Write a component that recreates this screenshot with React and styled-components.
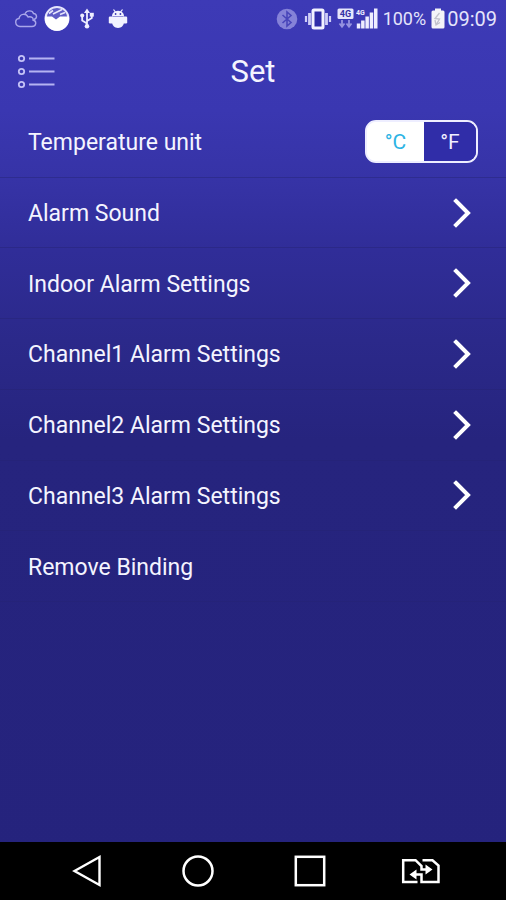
import React, { useState } from "react";
import styled, { createGlobalStyle } from "styled-components";

const GlobalStyle = createGlobalStyle`
  *, *::before, *::after { box-sizing: border-box; }
  html, body { margin: 0; padding: 0; }
  body, button { font-family: Roboto, "Liberation Sans", sans-serif; }
  button { margin: 0; padding: 0; border: 0; background: none; color: inherit; cursor: pointer; }
  svg { display: block; flex: none; }
`;

const Screen = styled.div`
  display: flex;
  flex-direction: column;
  min-height: 100vh;
  color: #f4f4ff;
  background: linear-gradient(
    #3d3ab6 0px,
    #3a37b1 110px,
    #3633a6 180px,
    #302d98 250px,
    #2b298a 340px,
    #26247e 440px,
    #25237d 100%
  );
`;

const StatusBar = styled.header`
  display: flex;
  align-items: center;
  justify-content: space-between;
  height: 37px;
  padding: 0 9px 0 15px;
`;

const IconGroup = styled.div`
  display: flex;
  align-items: center;
  gap: ${(p) => p.$gap};
`;

const StatusText = styled.span`
  font-size: ${(p) => p.$size};
  line-height: 24px;
  color: #e4e4fb;
`;

const TitleBar = styled.div`
  display: grid;
  grid-template-columns: 40px 1fr 40px;
  align-items: center;
  height: 70px;
  padding: 0 17px;
`;

const MenuButton = styled.button`
  justify-self: start;
`;

const Title = styled.h1`
  margin: 0;
  font-size: 31px;
  font-weight: 400;
  line-height: 36px;
  text-align: center;
`;

const SettingsList = styled.ul`
  display: grid;
  grid-template-rows: repeat(7, 1fr);
  min-height: 495px;
  margin: 0;
  padding: 0;
  list-style: none;
`;

const Item = styled.li`
  display: flex;
  border-bottom: 1px solid rgba(38, 36, 116, 0.45);
`;

const rowLayout = `
  display: flex;
  flex: 1;
  align-items: center;
  justify-content: space-between;
  padding: 0 28px;
  font-size: 23px;
  line-height: 28px;
  text-align: left;
`;

const Row = styled.div`
  ${rowLayout}
`;

const RowButton = styled.button`
  && { ${rowLayout} padding-right: 34px; }
`;

const Label = styled.span`
  padding-top: 3px;
`;

const UnitSwitch = styled.div`
  display: flex;
  width: 113px;
  height: 43px;
  border: 2px solid #eeeeff;
  border-radius: 11px;
  overflow: hidden;
  background: linear-gradient(90deg, #ffffff 50%, transparent 50%);
`;

const UnitOption = styled.button`
  && {
    flex: ${(p) => (p.$selected ? "57" : "52")};
    font-size: 21px;
    line-height: 24px;
    color: ${(p) => (p.$selected ? "#2db4e4" : "#f0f0ff")};
    background: ${(p) => (p.$selected ? "#ffffff" : "#302da8")};
  }
`;

const NavBar = styled.nav`
  display: grid;
  grid-template-columns: repeat(4, 1fr);
  justify-items: center;
  align-items: center;
  height: 58px;
  margin-top: auto;
  padding: 0 29px 0 31px;
  background: #000;
`;

const CloudIcon = () => (
  <svg width="23" height="20" viewBox="0 0 23 20" fill="none" stroke="#a9a6ea" strokeWidth="1.4" aria-hidden="true">
    <path d="M5 17.500C-.5 17-.5 10 4 9.500C5 4.500 11 4 13 8C17 7 18.500 9.500 18 11C22 12 21.500 17.500 17 17.500Z" />
    <path d="M10 4.700C12 .8 17.500 1 18.500 4.500C22 4.800 22.800 9 19 10.500" />
  </svg>
);

const SphereIcon = () => (
  <svg width="26" height="27" viewBox="0 0 26 27" aria-hidden="true">
    <circle cx="13" cy="13.500" r="11.500" fill="#5f5cc6" stroke="#e6e5fc" strokeWidth="2" />
    <path d="M1 11.500H8L12 14.500L16 11.500H25C26 20 20 25.800 13 25.800S0 20 1 11.500Z" fill="#fff" />
    <path d="M5 8.500L9 5.500M9 9L18 4.500M16 9.500L21 7.500" stroke="#e6e5fc" strokeWidth="1.600" />
  </svg>
);

const UsbIcon = () => (
  <svg width="14" height="21" viewBox="0 0 14 21" fill="none" stroke="#eeeeff" strokeWidth="1.800" aria-hidden="true">
    <path d="M7 4V17M7 15.500L2.200 12.500V8M7 13L11.800 10V7" />
    <path d="M4 5L7 .5L10 5Z" fill="#eeeeff" stroke="none" />
    <circle cx="7" cy="18.300" r="2.300" fill="#eeeeff" stroke="none" />
    <circle cx="2.200" cy="7.500" r="2" fill="#eeeeff" stroke="none" />
    <path d="M9.800 4.800H13.800V8.600H9.800Z" fill="#eeeeff" stroke="none" />
  </svg>
);

const AndroidIcon = () => (
  <svg width="20" height="20" viewBox="0 0 20 20" fill="#f2f2ff" aria-hidden="true">
    <path d="M4 7.500C4 5 5 3.500 6.500 2.700L5 .8L6 .2L7.600 2.200Q10 1.500 12.400 2.200L14 .2L15 .8L13.500 2.700C15 3.500 16 5 16 7.500Z" />
    <path d="M4 8H16V13C16 16 13.500 19 10 19S4 16 4 13Z" />
    <rect x=".8" y="7.500" width="4.500" height="7" rx="1.200" />
    <rect x="14.700" y="7.500" width="4.500" height="7" rx="1.200" />
    <circle cx="7.600" cy="5" r=".9" fill="#3c39b4" />
    <circle cx="12.400" cy="5" r=".9" fill="#3c39b4" />
  </svg>
);

const BluetoothIcon = () => (
  <svg width="22" height="22" viewBox="0 0 22 22" fill="none" aria-hidden="true">
    <circle cx="11" cy="11" r="10.300" fill="#8582d8" />
    <path d="M6.500 7L15 14.500L11 18V4L15 7.500L6.500 15" stroke="#4845ba" strokeWidth="1.600" />
  </svg>
);

const VibrateIcon = () => (
  <svg width="28" height="22" viewBox="0 0 28 22" aria-hidden="true">
    <rect x="9" y="2" width="10" height="18" rx="1" fill="#302da8" stroke="#f2f2ff" strokeWidth="3" />
    <path d="M5.500 5V17M22.500 5V17" stroke="#cfcef7" strokeWidth="2.800" />
    <path d="M2 8V14M26 8V14" stroke="#cfcef7" strokeWidth="2.200" />
  </svg>
);

const DataIcon = () => (
  <svg width="17" height="21" viewBox="0 0 17 21" aria-hidden="true">
    <rect x=".5" y=".5" width="16" height="10.500" rx="1.500" fill="#e6e6fc" />
    <text x="8.500" y="9" textAnchor="middle" fontFamily="Roboto, sans-serif" fontSize="9" fontWeight="700" fill="#3431a4">4G</text>
    <path d="M5 12V18M2.500 15.500L5 18.700L7.500 15.500M12 12V18M9.500 15.500L12 18.700L14.500 15.500" fill="none" stroke="#9693df" strokeWidth="1.800" />
  </svg>
);

const SignalIcon = () => (
  <svg width="22" height="21" viewBox="0 0 22 21" fill="#eeeeff" aria-hidden="true">
    <text x="0" y="7" fontFamily="Roboto, sans-serif" fontSize="7" fontWeight="700">4G</text>
    <path d="M.8 15.500H4.300V20.500H.8ZM5.100 12.500H8.600V20.500H5.100ZM9.400 8.500H12.900V20.500H9.400ZM13.700 4.500H17.200V20.500H13.700ZM18 .5H21.500V20.500H18Z" />
  </svg>
);

const BatteryIcon = () => (
  <svg width="14" height="21" viewBox="0 0 14 21" aria-hidden="true">
    <path d="M4 .5H10V2.500H12Q13.500 2.500 13.500 4V19Q13.500 20.500 12 20.500H2Q.5 20.500.5 19V4Q.5 2.500 2 2.500H4Z" fill="#f4f4f8" />
    <path d="M8.500 5L4 10.500L8.500 11L5 17M4 12L5 17L9 14.500" fill="none" stroke="#c2c2cc" strokeWidth="1.300" />
  </svg>
);

const MenuIcon = () => (
  <svg width="38" height="36" viewBox="0 0 38 36" fill="none" aria-hidden="true">
    <g stroke="#c3c1f6" strokeWidth="1.800">
      <circle cx="4.500" cy="4.500" r="2.700" />
      <circle cx="4.500" cy="17.500" r="2.700" />
      <circle cx="4.500" cy="30.500" r="2.700" />
    </g>
    <path d="M12 4.500H37.500M12 17.500H37.500M12 30.500H37.500" stroke="#b5b3f2" strokeWidth="1.800" />
  </svg>
);

const ChevronIcon = () => (
  <svg width="20" height="30" viewBox="0 0 20 30" fill="none" stroke="#fff" strokeWidth="4" aria-hidden="true">
    <path d="M4 3L16 15L4 27" strokeLinecap="square" />
  </svg>
);

const BackIcon = () => (
  <svg width="32" height="34" viewBox="0 0 32 34" fill="none" stroke="#fff" strokeWidth="2.400" aria-hidden="true">
    <path d="M3.500 17L28.500 3V31Z" />
  </svg>
);

const HomeIcon = () => (
  <svg width="34" height="34" viewBox="0 0 34 34" fill="none" stroke="#fff" strokeWidth="2.500" aria-hidden="true">
    <circle cx="17" cy="17" r="14.500" />
  </svg>
);

const RecentIcon = () => (
  <svg width="34" height="34" viewBox="0 0 34 34" fill="none" stroke="#fff" strokeWidth="2.500" aria-hidden="true">
    <rect x="2.800" y="2.800" width="28.400" height="28.400" />
  </svg>
);

const SimSwapIcon = () => (
  <svg width="40" height="26" viewBox="0 0 40 26" fill="none" stroke="#fff" strokeWidth="2.500" aria-hidden="true">
    <path d="M16.500 24H2.200V2.200H14.500L20.500 8V11.500H27" />
    <path d="M21.500 2.200H31.500L37.500 7.500V24H20.500V16.500H14" />
    <path d="M24.500 6.500L31.500 11.500L24.500 16.500ZM15.500 11.500L8.500 16.500L15.500 21.500Z" fill="#fff" stroke="none" />
  </svg>
);

const links = [
  "Alarm Sound",
  "Indoor Alarm Settings",
  "Channel1 Alarm Settings",
  "Channel2 Alarm Settings",
  "Channel3 Alarm Settings",
];

const navItems = [
  { label: "Back", Icon: BackIcon },
  { label: "Home", Icon: HomeIcon },
  { label: "Recent apps", Icon: RecentIcon },
  { label: "Switch SIM", Icon: SimSwapIcon },
];

export default function App() {
  const [unit, setUnit] = useState("°C");
  return (
    <>
      <GlobalStyle />
      <Screen>
        <StatusBar>
          <IconGroup $gap="10px">
            <IconGroup $gap="6px">
              <CloudIcon />
              <SphereIcon />
            </IconGroup>
            <IconGroup $gap="14px">
              <UsbIcon />
              <AndroidIcon />
            </IconGroup>
          </IconGroup>
          <IconGroup $gap="5px">
            <IconGroup $gap="6px">
              <BluetoothIcon />
              <VibrateIcon />
            </IconGroup>
            <IconGroup $gap="2px">
              <DataIcon />
              <SignalIcon />
            </IconGroup>
            <StatusText $size="18px">100%</StatusText>
            <IconGroup $gap="2px">
              <BatteryIcon />
              <StatusText $size="20px">09:09</StatusText>
            </IconGroup>
          </IconGroup>
        </StatusBar>
        <TitleBar>
          <MenuButton type="button" aria-label="Menu">
            <MenuIcon />
          </MenuButton>
          <Title>Set</Title>
        </TitleBar>
        <SettingsList>
          <Item>
            <Row>
              <Label id="unit-label">Temperature unit</Label>
              <UnitSwitch role="group" aria-labelledby="unit-label">
                {["°C", "°F"].map((u) => (
                  <UnitOption
                    key={u}
                    type="button"
                    $selected={u === unit}
                    aria-pressed={u === unit}
                    onClick={() => setUnit(u)}
                  >
                    {u}
                  </UnitOption>
                ))}
              </UnitSwitch>
            </Row>
          </Item>
          {links.map((label) => (
            <Item key={label}>
              <RowButton type="button">
                <Label>{label}</Label>
                <ChevronIcon />
              </RowButton>
            </Item>
          ))}
          <Item>
            <RowButton type="button">
              <Label>Remove Binding</Label>
            </RowButton>
          </Item>
        </SettingsList>
        <NavBar>
          {navItems.map(({ label, Icon }) => (
            <button key={label} type="button" aria-label={label}>
              <Icon />
            </button>
          ))}
        </NavBar>
      </Screen>
    </>
  );
}
